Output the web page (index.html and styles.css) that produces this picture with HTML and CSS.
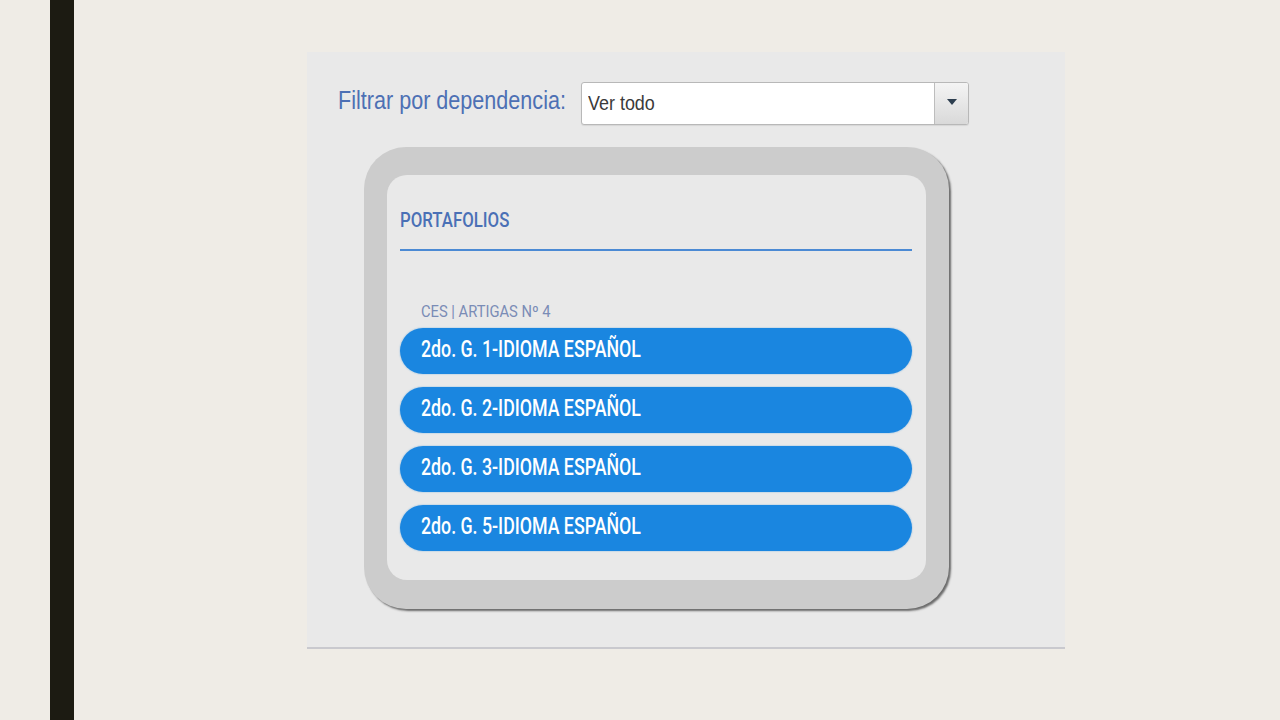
FILE: index.html
```html
<!DOCTYPE html>
<html lang="es">
<head>
<meta charset="utf-8">
<title>Portafolios</title>
<link rel="stylesheet" href="styles.css">
</head>
<body>
<div class="rail"></div>
<main class="stage">
  <section class="panel">
    <div class="filter">
      <label class="filter-label"><span class="squeeze label-text">Filtrar por dependencia:</span></label>
      <div class="select">
        <div class="select-value"><span class="squeeze value-text">Ver todo</span></div>
        <div class="select-btn"><span class="arrow"></span></div>
      </div>
    </div>
    <div class="card">
      <div class="card-inner">
        <h2 class="title"><span class="squeeze title-text">PORTAFOLIOS</span></h2>
        <hr class="rule">
        <div class="group"><span class="squeeze group-text">CES | ARTIGAS Nº 4</span></div>
        <ul class="list">
          <li class="item"><span class="squeeze item-text">2do. G. 1-IDIOMA ESPAÑOL</span></li>
          <li class="item"><span class="squeeze item-text">2do. G. 2-IDIOMA ESPAÑOL</span></li>
          <li class="item"><span class="squeeze item-text">2do. G. 3-IDIOMA ESPAÑOL</span></li>
          <li class="item"><span class="squeeze item-text">2do. G. 5-IDIOMA ESPAÑOL</span></li>
        </ul>
      </div>
    </div>
  </section>
</main>
</body>
</html>
```

FILE: styles.css
```css
* { box-sizing: border-box; }

html, body {
  margin: 0;
  padding: 0;
}

body {
  width: 1280px;
  height: 720px;
  overflow: hidden;
  background: #efece6;
  display: flex;
  font-family: "Liberation Sans", Arial, sans-serif;
}

.rail {
  width: 24px;
  height: 720px;
  margin-left: 50px;
  background: #1c1b12;
}

.stage {
  margin-left: 233px;
  padding-top: 52px;
}

.panel {
  width: 758px;
  height: 597px;
  background: #e9e9e9;
  border-bottom: 2px solid #c9c9ce;
  padding: 30px 0 0 31px;
}

.squeeze {
  display: inline-block;
  white-space: nowrap;
  transform-origin: left center;
}

.filter {
  display: flex;
  align-items: flex-start;
  height: 43px;
}

.filter-label {
  width: 243px;
  padding-top: 3px;
  line-height: 30px;
  font-size: 26px;
  color: #4d70b4;
}

.label-text { transform: scaleX(0.83); }

.select {
  width: 388px;
  height: 43px;
  display: flex;
  background: #fff;
  border: 1px solid #b8b8b8;
  border-radius: 3px;
  box-shadow: 0 1px 1px rgba(0,0,0,0.08);
}

.select-value {
  flex: 1;
  padding-left: 6px;
  line-height: 41px;
  font-size: 19.5px;
  color: #3a3a3a;
}

.value-text { transform: scaleX(0.92); }

.select-btn {
  width: 34px;
  border-left: 1px solid #bdbdbd;
  border-radius: 0 2px 2px 0;
  background: linear-gradient(#f4f4f4, #d9d9d9);
  display: flex;
  align-items: center;
  justify-content: center;
  padding-bottom: 4px;
}

.arrow {
  width: 0;
  height: 0;
  border-left: 5px solid transparent;
  border-right: 5px solid transparent;
  border-top: 6px solid #2d3e4f;
}

.card {
  width: 585px;
  margin: 22px 0 0 26px;
  padding: 28px 23px 29px 23px;
  background: #cccccc;
  border-radius: 42px;
  box-shadow: 2px 2px 2px rgba(40,40,40,0.65);
}

.card-inner {
  background: #e9e9e9;
  border-radius: 20px;
  padding: 33px 14px 29px 13px;
}

.title {
  margin: 0;
  height: 24px;
  line-height: 24px;
  font-family: Roboto, "Liberation Sans", sans-serif;
  font-weight: 500;
  font-size: 21px;
  color: #4a70b6;
}

.title-text { transform: scaleX(0.8); }

.rule {
  margin: 17px 0 0 0;
  border: 0;
  height: 2px;
  background: #4b8ad4;
}

.group {
  margin-top: 51px;
  padding-left: 21px;
  height: 20px;
  line-height: 20px;
  font-family: Roboto, "Liberation Sans", sans-serif;
  font-size: 16px;
  color: #7a8cb6;
}

.group-text { transform: scaleX(0.92); }

.list {
  list-style: none;
  margin: 6px 0 0 0;
  padding: 0;
  display: flex;
  flex-direction: column;
  gap: 13px;
}

.item {
  height: 46px;
  border-radius: 23px;
  background: #1a86e0;
  box-shadow: 0 0 1px 1px rgba(26,134,224,0.15);
  padding: 0 0 4px 21px;
  line-height: 42px;
  font-family: Roboto, "Liberation Sans", sans-serif;
  font-weight: 500;
  font-size: 24px;
  color: #ffffff;
}

.item-text { transform: scaleX(0.74); }
```
